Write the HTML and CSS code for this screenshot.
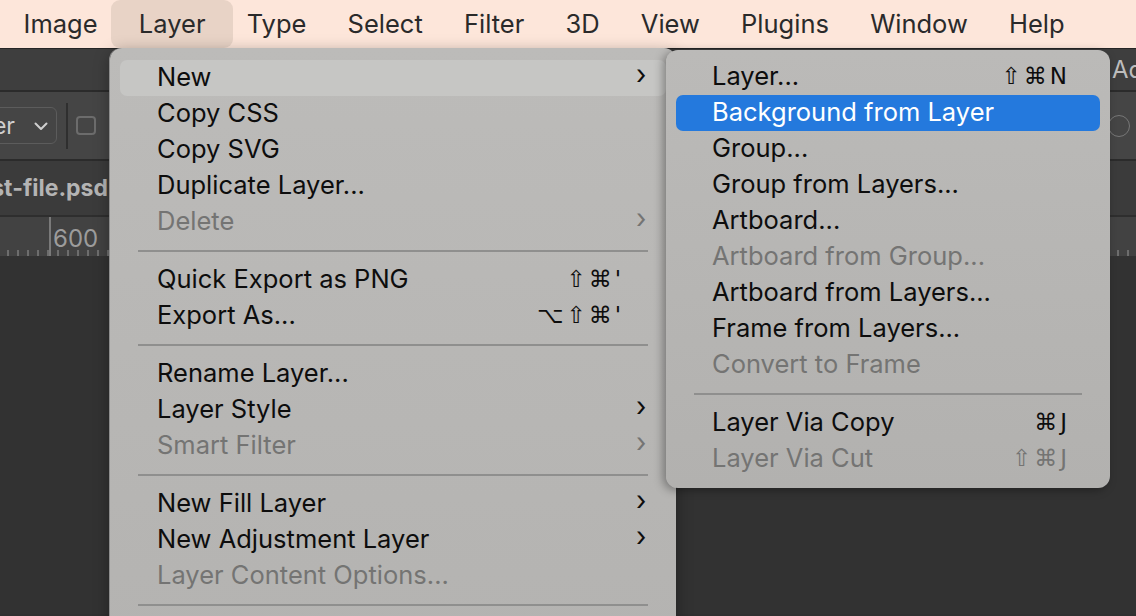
FILE: index.html
```html
<!DOCTYPE html>
<html lang="en">
<head>
    <meta charset="UTF-8">
    <title>Layer menu</title>
    <link rel="stylesheet" href="styles.css">
</head>
<body>
    <header class="menubar">
        <span class="mb-item">Image</span>
        <span class="mb-item active">Layer</span>
        <span class="mb-item">Type</span>
        <span class="mb-item">Select</span>
        <span class="mb-item">Filter</span>
        <span class="mb-item">3D</span>
        <span class="mb-item">View</span>
        <span class="mb-item">Plugins</span>
        <span class="mb-item">Window</span>
        <span class="mb-item">Help</span>
    </header>

    <main class="workspace">
        <div class="titlebar">
            <span class="app-title">Adobe</span>
        </div>
        <div class="optionsbar">
            <div class="select-clip">
                <div class="select-box">
                    Layer
                    <svg class="select-caret" width="14" height="9" viewBox="0 0 14 9">
                        <path d="M1.5 1.5 L7 7 L12.5 1.5" fill="none" stroke="#cfcfcf" stroke-width="2" stroke-linecap="round" stroke-linejoin="round"/>
                    </svg>
                </div>
            </div>
            <div class="opt-divider"></div>
            <div class="checkbox"></div>
            <div class="opt-spacer"></div>
            <div class="round-btn"></div>
        </div>
        <div class="tabbar">
            <div class="tab-clip"><span class="tab-name">test-file.psd</span></div>
        </div>
        <div class="ruler">
            <span class="ruler-mark">600</span>
        </div>
        <div class="canvas"></div>

        <!-- Layer menu -->
        <div class="menu main-menu">
            <div class="item hover"><span class="label">New</span><span class="arrow">&#8250;</span></div>
            <div class="item"><span class="label">Copy CSS</span></div>
            <div class="item"><span class="label">Copy SVG</span></div>
            <div class="item"><span class="label">Duplicate Layer...</span></div>
            <div class="item disabled"><span class="label">Delete</span><span class="arrow">&#8250;</span></div>
            <div class="sep"></div>
            <div class="item"><span class="label">Quick Export as PNG</span><span class="keys">&#8679;&#8984;'</span><span class="arrow"></span></div>
            <div class="item"><span class="label">Export As...</span><span class="keys">&#8997;&#8679;&#8984;'</span><span class="arrow"></span></div>
            <div class="sep"></div>
            <div class="item"><span class="label">Rename Layer...</span></div>
            <div class="item"><span class="label">Layer Style</span><span class="arrow">&#8250;</span></div>
            <div class="item disabled"><span class="label">Smart Filter</span><span class="arrow">&#8250;</span></div>
            <div class="sep"></div>
            <div class="item"><span class="label">New Fill Layer</span><span class="arrow">&#8250;</span></div>
            <div class="item"><span class="label">New Adjustment Layer</span><span class="arrow">&#8250;</span></div>
            <div class="item disabled"><span class="label">Layer Content Options...</span></div>
            <div class="sep"></div>
        </div>

        <!-- New submenu -->
        <div class="menu sub-menu">
            <div class="item"><span class="label">Layer...</span><span class="keys">&#8679;&#8984;N</span></div>
            <div class="item selected"><span class="label">Background from Layer</span></div>
            <div class="item"><span class="label">Group...</span></div>
            <div class="item"><span class="label">Group from Layers...</span></div>
            <div class="item"><span class="label">Artboard...</span></div>
            <div class="item disabled"><span class="label">Artboard from Group...</span></div>
            <div class="item"><span class="label">Artboard from Layers...</span></div>
            <div class="item"><span class="label">Frame from Layers...</span></div>
            <div class="item disabled"><span class="label">Convert to Frame</span></div>
            <div class="sep"></div>
            <div class="item"><span class="label">Layer Via Copy</span><span class="keys">&#8984;J</span></div>
            <div class="item disabled"><span class="label">Layer Via Cut</span><span class="keys">&#8679;&#8984;J</span></div>
        </div>
    </main>
</body>
</html>
```

FILE: styles.css
```css
* {
    margin: 0;
    padding: 0;
    box-sizing: border-box;
}

body {
    width: 1136px;
    height: 616px;
    overflow: hidden;
    font-family: Inter, "Liberation Sans", sans-serif;
    background: #303030;
}

/* top menu bar */
.menubar {
    height: 48px;
    display: flex;
    align-items: stretch;
    padding-left: 3px;
    background: #fde6da;
    color: #2a2a2a;
    font-size: 25.5px;
}

.mb-item {
    display: flex;
    align-items: center;
    padding: 0 20.6px 2px;
}

.mb-item.active {
    padding: 0 28px 2px;
    margin: 0 -7.4px;
    background: #e8d3c6;
    border-radius: 9px;
}

/* dark photoshop window behind the menus */
.workspace {
    position: relative;
    height: 568px;
    color: #a9a9a9;
}

.titlebar {
    height: 44px;
    display: flex;
    align-items: center;
    overflow: hidden;
    background: #3e3e3e;
    border-top: 1px solid #262626;
    border-bottom: 2px solid #2b2b2b;
}

.app-title {
    margin-left: 1112px;
    white-space: nowrap;
    font-size: 24px;
    color: #bdbdbd;
}

.optionsbar {
    height: 69px;
    display: flex;
    align-items: center;
    background: #454545;
    border-bottom: 2px solid #2b2b2b;
}

.select-clip {
    width: 57px;
    display: flex;
    justify-content: flex-end;
    overflow: hidden;
}

.select-box {
    flex-shrink: 0;
    display: flex;
    align-items: center;
    gap: 19px;
    height: 37px;
    padding: 0 8px 0 12px;
    border: 1px solid #5c5c5c;
    border-radius: 6px;
    font-size: 23px;
    color: #d0d0d0;
    white-space: nowrap;
}

.select-caret {
    margin-top: 2px;
}

.opt-divider {
    width: 2px;
    height: 46px;
    margin-left: 9px;
    background: #2f2f2f;
}

.checkbox {
    width: 20px;
    height: 19px;
    margin-left: 8px;
    border: 2px solid #6c6c6c;
    border-radius: 4px;
}

.opt-spacer {
    flex: 1;
}

.round-btn {
    width: 22px;
    height: 22px;
    margin-right: 6px;
    border: 1.5px solid #777;
    border-radius: 50%;
}

.tabbar {
    height: 56px;
    display: flex;
    align-items: center;
    background: #3b3b3b;
    border-bottom: 2px solid #2e2e2e;
}

.tab-clip {
    width: 108px;
    display: flex;
    justify-content: flex-end;
    overflow: hidden;
}

.tab-name {
    flex-shrink: 0;
    white-space: nowrap;
    font-weight: bold;
    font-size: 23px;
    color: #b4b4b4;
}

.ruler {
    height: 39px;
    display: flex;
    align-items: center;
    background-color: #424242;
    background-image: repeating-linear-gradient(90deg, #6d6d6d 0 2px, transparent 2px 10px);
    background-size: 100% 6px;
    background-position: 7px 100%;
    background-repeat: no-repeat;
}

.ruler-mark {
    margin-left: 49px;
    padding-left: 2px;
    padding-top: 3px;
    height: 100%;
    display: flex;
    align-items: center;
    border-left: 2px solid #7a7a7a;
    font-size: 24px;
    color: #9c9c9c;
}

.canvas {
    height: 358px;
    background: #323232;
}

/* menus */
.menu {
    position: absolute;
    font-size: 25.5px;
    color: #0d0d0d;
}

.main-menu {
    left: 110px;
    top: 0;
    width: 566px;
    height: 600px;
    padding: 12px 10px 0;
    background: linear-gradient(180deg, #bcbbb9, #b4b3b1);
    border-radius: 12px 12px 0 0;
    box-shadow: -1px 0 0 #8d8d8d, 0 4px 16px rgba(0, 0, 0, 0.35);
}

.sub-menu {
    left: 666px;
    top: 2px;
    width: 444px;
    height: 438px;
    padding: 9px 10px 0;
    background: linear-gradient(180deg, #bbbab8, #b2b1af);
    border-radius: 12px;
    box-shadow: -3px 2px 10px rgba(0, 0, 0, 0.35);
}

.item {
    height: 36px;
    display: flex;
    align-items: center;
    border-radius: 7px;
    white-space: nowrap;
}

.main-menu .item {
    padding: 0 20px 3px 37px;
}

.sub-menu .item {
    padding: 0 30px 3px 36px;
}

.item .label {
    flex: 1;
}

.item .keys {
    font-family: "DejaVu Sans", sans-serif;
    font-size: 23px;
    letter-spacing: 3px;
}

.main-menu .item .keys {
    margin-right: 12px;
}

.item .arrow {
    width: 10px;
    font-size: 27px;
    line-height: 1;
    margin-top: -4px;
}

.item.hover {
    background: #c6c6c4;
}

.item.selected {
    background: #2479dd;
    color: #fff;
}

.item.disabled {
    color: #747473;
}

.sep {
    height: 22px;
    margin: 0 18px;
    display: flex;
    align-items: center;
}

.sep::before {
    content: "";
    flex: 1;
    height: 2px;
    background: #8f8f8e;
}
```
